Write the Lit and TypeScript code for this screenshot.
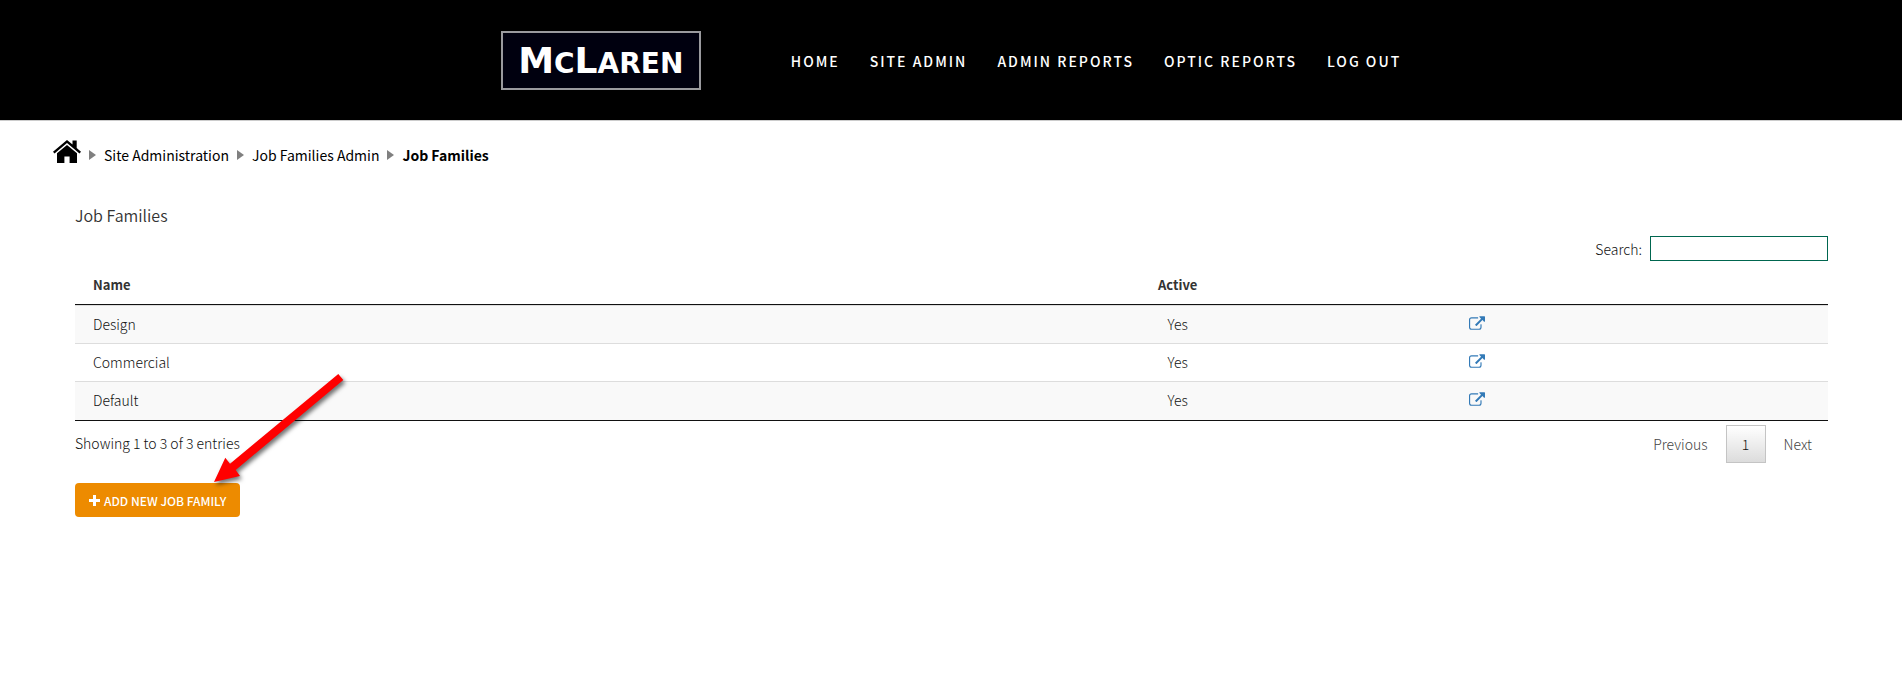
import { LitElement, html, css, svg } from "lit";
import { customElement, property, state } from "lit/decorators.js";

interface JobFamily {
  name: string;
  active: boolean;
}

@customElement("site-header")
class SiteHeader extends LitElement {
  static styles = css`
    :host {
      display: block;
      background: #000;
      border-bottom: 1px solid #ccc;
    }
    .bar {
      display: flex;
      justify-content: center;
      align-items: center;
      gap: 90px;
      min-height: 120px;
    }
    .logo {
      box-sizing: border-box;
      width: 200px;
      height: 59px;
      display: flex;
      align-items: center;
      justify-content: center;
      padding-top: 4px;
      border: 2px solid #9a9a9e;
      background: #00000f;
      color: #fff;
      text-decoration: none;
      font: bold 28px/32px "DejaVu Sans", sans-serif;
    }
    .cap {
      font-size: 36px;
    }
    nav {
      display: flex;
      gap: 30px;
      padding-top: 2px;
    }
    nav a {
      color: #fff;
      text-decoration: none;
      text-transform: uppercase;
      letter-spacing: 2px;
      font-size: 14px;
      font-weight: 500;
      line-height: 24px;
    }
  `;

  render() {
    const links = ["Home", "Site Admin", "Admin Reports", "Optic Reports", "Log Out"];
    return html`
      <header class="bar">
        <a class="logo" href="#" aria-label="McLaren"><span><span class="cap">M</span>C<span class="cap">L</span>AREN</span></a>
        <nav>${links.map((l) => html`<a href="#">${l}</a>`)}</nav>
      </header>
    `;
  }
}

@customElement("bread-crumbs")
class BreadCrumbs extends LitElement {
  @property({ type: Array }) trail: string[] = [];

  static styles = css`
    :host {
      display: block;
    }
    nav {
      display: flex;
      align-items: center;
      gap: 8px;
      color: #000;
      font-size: 14px;
      line-height: 24px;
    }
    a {
      color: inherit;
      text-decoration: none;
    }
    .home {
      display: block;
      padding-bottom: 6px;
    }
    svg {
      display: block;
    }
    .caret {
      fill: #808080;
    }
    .here {
      font-weight: 700;
    }
  `;

  render() {
    const last = this.trail.length - 1;
    return html`
      <nav aria-label="Breadcrumb">
        <a class="home" href="#" aria-label="Home">
          <svg width="28" height="23" viewBox="0 0 28 23">
            <path d="M14 0 19.5 4.6V.6h4.2v7.5L28 11.8l-1.5 1.7L14 3.1 1.500 13.500 0 11.800z" />
            <path d="M14 5 24 13.300V23h-7.400v-6.500h-5.200V23H4V13.300z" />
          </svg>
        </a>
        ${this.trail.map(
          (t, i) => html`
            <svg class="caret" width="7" height="10" viewBox="0 0 7 10"><path d="M0 0 7 5 0 10z" /></svg>
            ${i === last ? html`<span class="here" aria-current="page">${t}</span>` : html`<a href="#">${t}</a>`}
          `
        )}
      </nav>
    `;
  }
}

@customElement("family-table")
class FamilyTable extends LitElement {
  @property({ type: Array }) rows: JobFamily[] = [];
  @state() private query = "";

  static styles = css`
    :host {
      display: block;
      color: #111;
      font-size: 14px;
      font-weight: 300;
      line-height: 20px;
    }
    .search {
      display: flex;
      justify-content: flex-end;
      align-items: center;
      gap: 8px;
    }
    input {
      box-sizing: border-box;
      width: 178px;
      height: 25px;
      border: 1px solid #00664f;
      background: #fff;
      font: inherit;
      padding: 0 4px;
      outline: none;
    }
    table {
      width: 100%;
      margin-top: 4px;
      table-layout: fixed;
      border-collapse: separate;
      border-spacing: 0;
      border-bottom: 1px solid #111;
    }
    .w-name {
      width: 60%;
    }
    .w-active,
    .w-rest {
      width: 5.8%;
    }
    th {
      padding: 10px 18px 9px;
      border-bottom: 1px solid #111;
      color: #333;
      font-size: 13px;
      font-weight: 700;
      text-align: left;
    }
    td {
      padding: 8px 18px 9px;
      height: 20px;
      border-top: 1px solid #ddd;
    }
    tbody tr:last-child td {
      padding-bottom: 10px;
    }
    tbody tr:nth-child(odd) {
      background: #f9f9f9;
    }
    th.mid,
    td.mid {
      padding-left: 0;
      padding-right: 0;
      text-align: center;
    }
    .open {
      display: inline-block;
      color: #337ab7;
    }
    .open svg {
      display: block;
      fill: currentColor;
    }
    .foot {
      display: flex;
      justify-content: space-between;
      align-items: flex-start;
      padding-top: 4px;
    }
    .status {
      padding-top: 8px;
    }
    .pages {
      display: flex;
      gap: 2px;
    }
    .pages button {
      box-sizing: border-box;
      min-width: 40px;
      height: 38px;
      padding: 0 15px;
      border: 1px solid transparent;
      background: none;
      font: inherit;
      color: #444;
    }
    .pages .current {
      border-color: #c4c4c4;
      background: linear-gradient(#fff, #dcdcdc);
      color: #111;
    }
  `;

  private icon() {
    return svg`<path d="M22 14.500v5A4.500 4.500 0 0 1 17.500 24h-13A4.500 4.500 0 0 1 0 19.500v-13A4.500 4.500 0 0 1 4.500 2h11a.5.5 0 0 1 .5.5v1a.5.5 0 0 1-.5.5h-11A2.500 2.500 0 0 0 2 6.500v13A2.500 2.500 0 0 0 4.500 22h13a2.500 2.500 0 0 0 2.500-2.500v-5a.5.5 0 0 1 .5-.5h1a.5.5 0 0 1 .5.5zM28 1v8a1 1 0 0 1-1.700.7L23.550 6.950 13.360 17.140a.5.5 0 0 1-.72 0l-1.780-1.780a.5.5 0 0 1 0-.72L21.050 4.450 18.300 1.700A1 1 0 0 1 19 0h8a1 1 0 0 1 1 1z"/>`;
  }

  render() {
    const q = this.query.toLowerCase();
    const shown = this.rows.filter((r) => r.name.toLowerCase().includes(q));
    return html`
      <div class="search">
        <label for="q">Search:</label>
        <input id="q" type="search" .value=${this.query} @input=${(e: Event) => (this.query = (e.target as HTMLInputElement).value)} />
      </div>
      <table>
        <colgroup>
          <col class="w-name" />
          <col class="w-active" />
          <col />
          <col class="w-rest" />
        </colgroup>
        <thead>
          <tr>
            <th>Name</th>
            <th class="mid">Active</th>
            <th></th>
            <th></th>
          </tr>
        </thead>
        <tbody>
          ${shown.map(
            (r) => html`
              <tr>
                <td>${r.name}</td>
                <td class="mid">${r.active ? "Yes" : "No"}</td>
                <td class="mid">
                  <a class="open" href="#" aria-label="Open ${r.name}"><svg width="16" height="14" viewBox="0 0 28 24">${this.icon()}</svg></a>
                </td>
                <td></td>
              </tr>
            `
          )}
        </tbody>
      </table>
      <div class="foot">
        <span class="status">Showing 1 to ${shown.length} of ${this.rows.length} entries</span>
        <div class="pages">
          <button type="button">Previous</button>
          <button type="button" class="current">1</button>
          <button type="button">Next</button>
        </div>
      </div>
    `;
  }
}

@customElement("app-root")
class AppRoot extends LitElement {
  private families: JobFamily[] = [
    { name: "Design", active: true },
    { name: "Commercial", active: true },
    { name: "Default", active: true },
  ];

  static styles = css`
    :host {
      display: block;
      min-height: 100vh;
      background: #fff;
      font-family: "Noto Sans CJK SC", "Source Sans Pro", sans-serif;
    }
    bread-crumbs {
      padding: 19px 53px 0;
    }
    main {
      padding: 34px 74px 40px 75px;
    }
    h1 {
      margin: 0 0 9px;
      color: #333;
      font-size: 16px;
      font-weight: 350;
      line-height: 24px;
    }
    .action {
      position: relative;
      display: inline-block;
      margin-top: 20px;
    }
    .add {
      display: flex;
      align-items: center;
      gap: 4px;
      height: 34px;
      padding: 0 14px;
      border: 0;
      border-radius: 4px;
      background: #ed8b00;
      color: #fff;
      font: inherit;
      font-size: 12px;
      font-weight: 500;
      text-transform: uppercase;
      white-space: nowrap;
    }
    .add svg {
      fill: #fff;
    }
    .arrow {
      position: absolute;
      right: -114px;
      bottom: 24px;
      pointer-events: none;
      filter: drop-shadow(2px 3px 2px rgba(0, 0, 0, 0.55));
    }
  `;

  render() {
    return html`
      <site-header></site-header>
      <bread-crumbs .trail=${["Site Administration", "Job Families Admin", "Job Families"]}></bread-crumbs>
      <main>
        <h1>Job Families</h1>
        <family-table .rows=${this.families}></family-table>
        <div class="action">
          <button class="add" type="button">
            <svg width="11" height="11" viewBox="0 0 11 11"><path d="M4 0h3v4h4v3H7v4H4V7H0V4h4z" /></svg>
            Add new job family
          </button>
          <svg class="arrow" width="144" height="123" viewBox="210 370 144 123">
            <path fill="#f00" d="M338.300 374 343.300 380 235.700 470 240 476 214 482 225.300 457.700 230 463.700z" />
          </svg>
        </div>
      </main>
    `;
  }
}
